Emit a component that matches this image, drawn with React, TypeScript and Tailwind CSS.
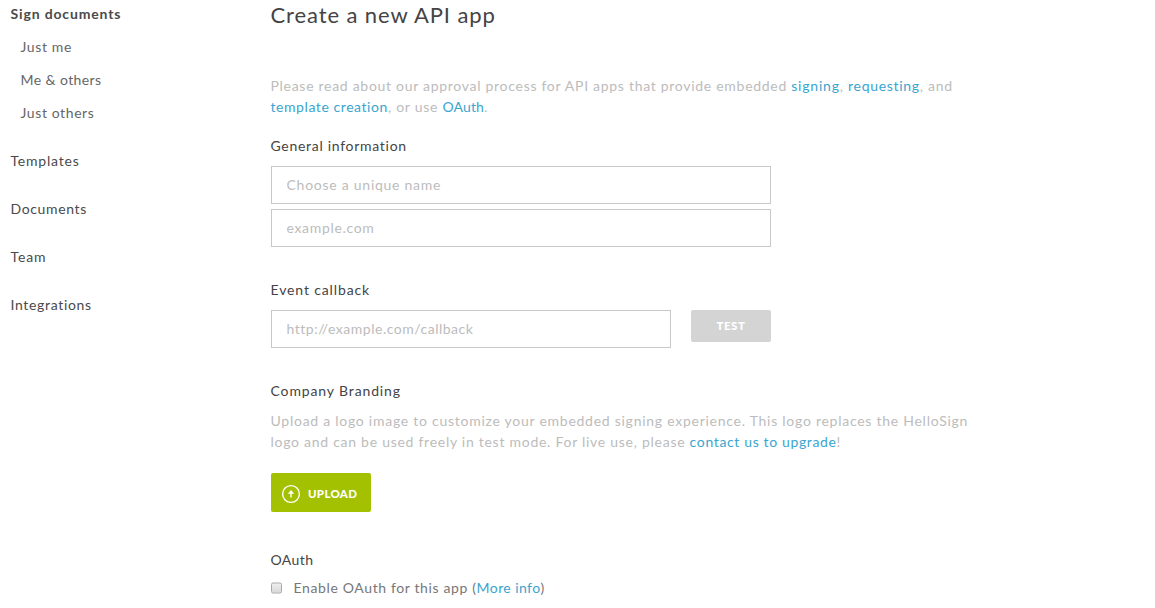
import type { ReactNode } from "react";

function Link({ children, className = "" }: { children: ReactNode; className?: string }) {
  return (
    <a href="#" className={`text-[#3aa5cf] ${className}`}>
      {children}
    </a>
  );
}

function Heading({ children, className = "" }: { children: ReactNode; className?: string }) {
  return <h2 className={`-ml-[0.5px] h-5 text-sm leading-5 text-[#444] ${className}`}>{children}</h2>;
}

function Sidebar() {
  return (
    <nav className="flex w-[271px] shrink-0 flex-col pt-1 pl-[10.5px] text-sm leading-5 text-[#4a4a4a]">
      <a href="#" className="font-bold tracking-[0.85px]">Sign documents</a>
      <div className="mt-[13px] mb-7 flex flex-col gap-[13px] pl-2.5 text-[#666]">
        <a href="#" className="tracking-[0.62px]">Just me</a>
        <a href="#" className="tracking-[0.42px]">Me &amp; others</a>
        <a href="#" className="tracking-[0.6px]">Just others</a>
      </div>
      <div className="flex flex-col gap-7">
        <a href="#" className="tracking-[0.79px]">Templates</a>
        <a href="#" className="tracking-[0.64px]">Documents</a>
        <a href="#" className="tracking-[0.85px]">Team</a>
        <a href="#" className="tracking-[0.67px]">Integrations</a>
      </div>
    </nav>
  );
}

function Field({ placeholder, className }: { placeholder: string; className: string }) {
  return (
    <input
      type="text"
      placeholder={placeholder}
      className={`block h-[38px] border border-[#c8c8c8] bg-white px-[14.5px] pb-0.5 text-sm text-[#444] outline-none placeholder:text-[#bcbcbc] ${className}`}
    />
  );
}

function UploadIcon() {
  return (
    <svg width="20" height="20" viewBox="0 0 20 20" fill="none" stroke="#fff">
      <circle cx="10" cy="10" r="8.4" strokeWidth="1.4" />
      <path d="M10 13.6V8" strokeWidth="1.4" />
      <path d="M10 6L6.8 9.7H13.2Z" fill="#fff" stroke="none" />
    </svg>
  );
}

export default function App() {
  return (
    <div className="flex h-[608px] w-[1155px] overflow-hidden bg-white font-['Lato',sans-serif] [font-variant-ligatures:none]">
      <Sidebar />
      <main className="flex flex-col items-start">
        <h1 className="-ml-[0.5px] h-[30px] text-[22px] leading-[30px] tracking-[0.9px] text-[#444]">Create a new API app</h1>
        <p className="mt-[45px] -ml-[0.5px] text-sm leading-[21px] whitespace-nowrap text-[#bcbcbc]">
          <span className="tracking-[0.71px]">Please read about our approval process for API apps that provide embedded </span>
          <Link className="tracking-[0.78px]">signing</Link>
          <span className="tracking-[0.8px]">, </span>
          <Link className="tracking-[0.68px]">requesting</Link>
          <span className="tracking-[0.78px]">, and</span>
          <br />
          <Link className="tracking-[0.57px]">template creation</Link>
          <span className="tracking-[0.74px]">, or use </span>
          <Link className="tracking-[0.1px]">OAuth</Link>.
        </p>

        <Heading className="mt-[19px] tracking-[0.71px]">General information</Heading>
        <Field placeholder="Choose a unique name" className="mt-2.5 w-[500px] tracking-[0.74px]" />
        <Field placeholder="example.com" className="mt-[5px] w-[500px] tracking-[0.67px]" />

        <Heading className="mt-[33px] tracking-[0.87px]">Event callback</Heading>
        <div className="mt-2.5 flex items-start gap-5">
          <Field placeholder="http://example.com/callback" className="w-[400px] tracking-[0.51px]" />
          <button className="h-8 w-20 rounded-[2px] bg-[#d4d4d4] text-[11.5px] font-black tracking-[0.5px] text-white">TEST</button>
        </div>

        <Heading className="mt-[33px] tracking-[0.87px]">Company Branding</Heading>
        <p className="mt-[9px] -ml-[0.5px] text-sm leading-[21px] whitespace-nowrap text-[#bcbcbc]">
          <span className="tracking-[0.74px]">
            Upload a logo image to customize your embedded signing experience. This logo replaces the HelloSign
          </span>
          <br />
          <span className="tracking-[0.73px]">logo and can be used freely in test mode. For live use, please </span>
          <Link className="tracking-[0.64px]">contact us to upgrade</Link>!
        </p>
        <button className="mt-[21px] flex h-[39px] w-[100px] items-center rounded-[2px] bg-[#a3c100] pt-[3px] pl-2.5 text-[11.5px] font-black text-white">
          <UploadIcon />
          <span className="ml-[7px] tracking-[0.3px]">UPLOAD</span>
        </button>

        <Heading className="mt-[38px] tracking-[0.4px]">OAuth</Heading>
        <label className="mt-2 flex h-5 items-center text-sm whitespace-nowrap text-[#777]">
          <input
            type="checkbox"
            className="size-[11px] -translate-y-[0.5px] appearance-none rounded-[2px] border border-[#a8a8a8] bg-linear-to-b from-[#eee] to-[#d9d9d9]"
          />
          <span className="ml-[11.5px]">
            <span className="tracking-[0.63px]">Enable OAuth for this app (</span>
            <Link className="tracking-[0.42px]">More info</Link>)
          </span>
        </label>
      </main>
    </div>
  );
}
